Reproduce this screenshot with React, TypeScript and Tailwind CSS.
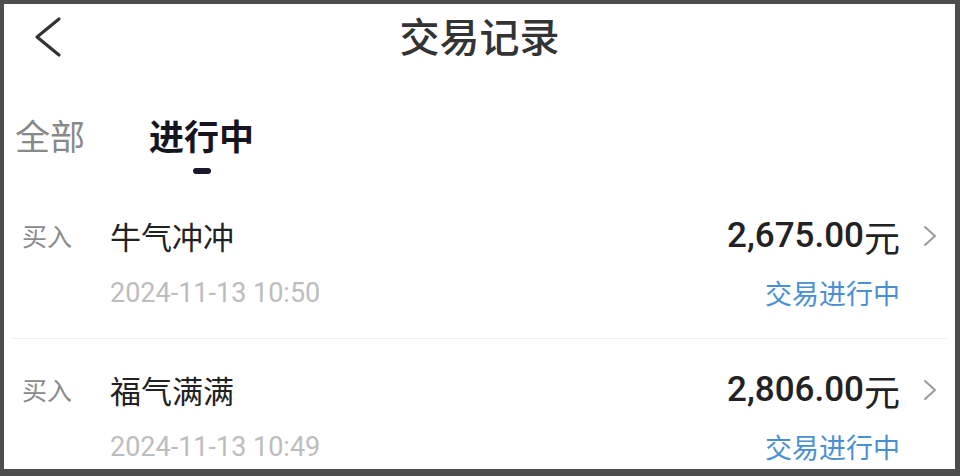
import React from "react";

type Trade = {
  id: number;
  kind: string;
  name: string;
  time: string;
  amount: string;
  status: string;
};

const trades: Trade[] = [
  { id: 1, kind: "买入", name: "牛气冲冲", time: "2024-11-13 10:50", amount: "2,675.00", status: "交易进行中" },
  { id: 2, kind: "买入", name: "福气满满", time: "2024-11-13 10:49", amount: "2,806.00", status: "交易进行中" },
];

const cjk = "font-['Noto_Sans_CJK_SC','Noto_Sans',sans-serif]";
const num = "font-['Roboto','Noto_Sans_CJK_SC',sans-serif]";

function Row({ t, last }: { t: Trade; last?: boolean }) {
  return (
    <div className={`mx-[8px] flex items-start ${last ? "pt-[31px]" : "pt-[42px] pb-[30px] border-b border-[#f1f1f1]"}`}>
      <div className={`w-[98px] pl-[10px] h-[40px] flex items-center text-[25px] text-[#8a8a8a] ${cjk}`}>
        {t.kind}
      </div>
      <div className="flex-1">
        <div className={`h-[40px] flex items-center text-[31px] text-[#222] ${cjk}`}>{t.name}</div>
        <div className={`mt-[22px] h-[30px] flex items-center text-[27px] text-[#bdbdbd] ${num}`}>{t.time}</div>
      </div>
      <div className="flex flex-col items-end">
        <div className={`h-[40px] flex items-center text-[35px] text-[#222] font-medium ${num}`}>
          {t.amount}
          <span className={`${cjk} font-normal text-[36px]`}>元</span>
        </div>
        <div className={`mt-[22px] h-[30px] flex items-center text-[27px] text-[#4b8fd3] ${cjk}`}>{t.status}</div>
      </div>
      <div className="w-[47px] h-[40px] flex items-center pl-[23px]">
        <svg width="14" height="22" viewBox="0 0 14 22" fill="none">
          <path d="M2 2 L12 11 L2 20" stroke="#9a9a9a" strokeWidth="2" strokeLinecap="round" strokeLinejoin="round" />
        </svg>
      </div>
    </div>
  );
}

export default function App() {
  return (
    <div className="w-[960px] h-[476px] bg-[#4d4d4d] pt-[4px] pl-[4px] pr-[5px] pb-[7px]">
      <main className="w-full h-full bg-white overflow-hidden">
        {/* header */}
        <div className="relative h-[62px] flex items-center justify-center">
          <button className="absolute left-[28px] top-[10px]">
            <svg width="32" height="46" viewBox="0 0 32 46" fill="none">
              <path d="M27 5 L5 23 L27 41" stroke="#333" strokeWidth="3.2" strokeLinecap="round" strokeLinejoin="round" />
            </svg>
          </button>
          <h1 className={`text-[40px] text-[#333] font-medium ${cjk}`}>交易记录</h1>
        </div>

        {/* tabs */}
        <div className="flex items-start pl-[11px] mt-[47px]">
          <div className={`h-[44px] flex items-center text-[35px] text-[#888] ${cjk}`}>全部</div>
          <div className="ml-[64px] flex flex-col items-center">
            <div className={`h-[44px] flex items-center text-[35px] text-[#15151f] font-bold ${cjk}`}>进行中</div>
            <div className="mt-[11px] w-[18px] h-[6px] rounded-full bg-[#1a1a2c]" />
          </div>
        </div>

        {/* list */}
        {trades.map((t, i) => (
          <Row key={t.id} t={t} last={i === trades.length - 1} />
        ))}
      </main>
    </div>
  );
}
